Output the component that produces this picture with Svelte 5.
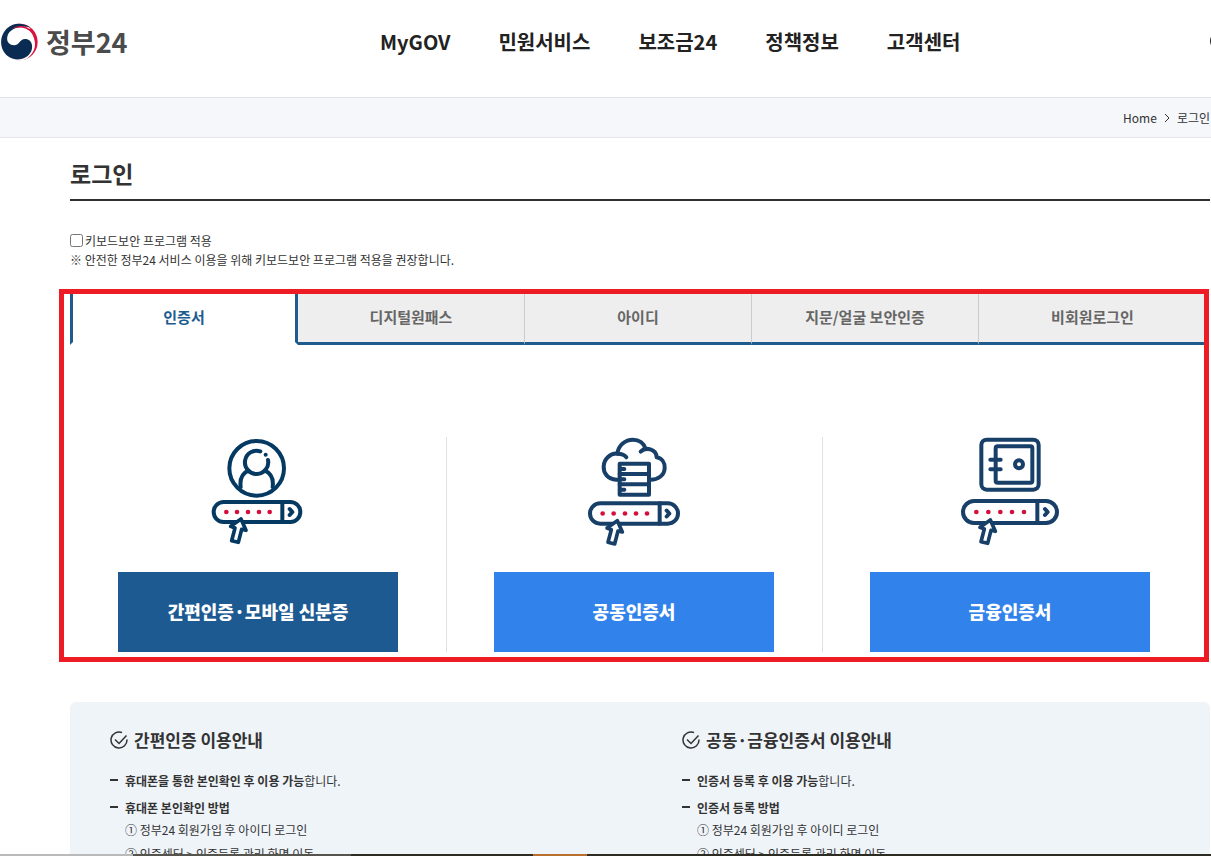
<script>
    const menus = ['MyGOV', '민원서비스', '보조금24', '정책정보', '고객센터'];
    const tabs = ['인증서', '디지털원패스', '아이디', '지문/얼굴 보안인증', '비회원로그인'];
    let activeTab = '인증서';

    const methods = [
        {
            id: 'simple', label: '간편인증·모바일 신분증', viewBox: '24 21 360 330',
            bar: { x: 71, y: 216, w: 260, h: 60 }, divider: 277, chevron: 299,
            dots: [109, 141, 174, 207, 239]
        },
        {
            id: 'joint', label: '공동인증서', viewBox: '27 21 360 330',
            bar: { x: 75, y: 220, w: 264, h: 61 }, divider: 284, chevron: 305,
            dots: [113, 146, 180, 213, 246]
        },
        {
            id: 'finance', label: '금융인증서', viewBox: '30 21 360 330',
            bar: { x: 69, y: 213, w: 282, h: 66 }, divider: 292, chevron: 315,
            dots: [109, 145, 181, 216, 252]
        }
    ];

    const guides = [
        {
            title: '간편인증 이용안내',
            strong: '휴대폰을 통한 본인확인 후 이용 가능',
            method: '휴대폰 본인확인 방법'
        },
        {
            title: '공동·금융인증서 이용안내',
            strong: '인증서 등록 후 이용 가능',
            method: '인증서 등록 방법'
        }
    ];
    const steps = ['① 정부24 회원가입 후 아이디 로그인', '② 인증센터 > 인증등록 관리 화면 이동'];
</script>

<div class="page">
    <header class="header">
        <a href="/" class="logo">
            <svg width="38" height="38" viewBox="0 0 114 114" aria-hidden="true">
                <circle cx="58" cy="57" r="55" fill="#d9123f" />
                <path d="M92 17A55 55 0 1 0 80 107C98 94 108 76 104 54C101 38 94 25 80 18Z" fill="#fff" />
                <path d="M90 13C70 -3 38 -2 19 18C-4 42 -1 80 23 99C43 115 76 112 90 91C101 75 98 52 79 48C58 45 61 66 42 67C27 67 19 55 22 41C26 20 54 7 90 13Z" fill="#0b2c52" />
                <path d="M36 17C56 4 83 7 98 28C78 13 57 10 36 17Z" fill="#d9123f" />
            </svg>
            <span>정부24</span>
        </a>
        <nav class="menu">
            {#each menus as menu}
                <a href="/">{menu}</a>
            {/each}
        </nav>
        <button class="search" type="button" aria-label="검색">
            <svg width="24" height="24" viewBox="0 0 24 24" fill="none" stroke="#222" stroke-width="2">
                <circle cx="10" cy="11" r="8" />
                <path d="M16 17l6 6" />
            </svg>
        </button>
    </header>

    <div class="breadcrumb">
        <a href="/">Home</a>
        <svg width="6" height="10" viewBox="0 0 6 10" fill="none" stroke="#333" aria-hidden="true">
            <path d="M1 1l4 4-4 4" />
        </svg>
        <span>로그인</span>
    </div>

    <main class="content">
        <h1>로그인</h1>

        <div class="security">
            <label><input type="checkbox" />키보드보안 프로그램 적용</label>
            <p>※ 안전한 정부24 서비스 이용을 위해 키보드보안 프로그램 적용을 권장합니다.</p>
        </div>

        <section class="login">
            <div class="tabs" role="tablist">
                {#each tabs as tab}
                    <button
                        type="button"
                        role="tab"
                        class="tab"
                        class:active={tab === activeTab}
                        aria-selected={tab === activeTab}
                        on:click={() => (activeTab = tab)}
                    >{tab}</button>
                {/each}
            </div>

            <div class="methods">
                {#each methods as m}
                    <div class="method">
                        <svg class="icon {m.id}" width="120" height="110" viewBox={m.viewBox} aria-hidden="true">
                            {#if m.id === 'simple'}
                                <circle cx="200" cy="115" r="82" />
                                <path d="M211 64A35 35 0 1 0 234 90" />
                                <path d="M152 171C149 147 157 130 175 122M225 122C243 130 251 147 248 171" />
                                <circle class="solid" cx="227" cy="74" r="6" />
                            {:else if m.id === 'joint'}
                                <path d="M162 149H154C128 147 115 130 116 109C117 87 136 69 157 71C171 71 180 75 184 82" />
                                <path d="M157 71C160 45 181 29 204 29C222 29 237 39 242 57" />
                                <path d="M227 65C242 50 274 56 275 82C290 84 300 97 299 115C298 136 279 150 254 149" />
                                <rect x="164" y="101" width="88" height="93" />
                                <path d="M164 132H252M164 163H252M168 117H178M168 148H178M168 179H178" />
                            {:else}
                                <rect x="124" y="29" width="172" height="150" rx="16" />
                                <rect x="167" y="49" width="110" height="109" rx="6" />
                                <path d="M151 89H182M151 118H182" />
                                <circle cx="237" cy="103" r="12" />
                            {/if}
                            <rect x={m.bar.x} y={m.bar.y} width={m.bar.w} height={m.bar.h} rx={m.bar.h / 2} />
                            <path d="M{m.divider} {m.bar.y}v{m.bar.h}" />
                            <path d="M{m.chevron} {m.bar.y + m.bar.h / 2 - 9}l8 9-8 9" />
                            {#each m.dots as x}
                                <circle class="dot" cx={x} cy={m.bar.y + m.bar.h / 2} r="7" />
                            {/each}
                            <path
                                class="pointer"
                                transform="translate({m.bar.x - 71} {m.bar.h + m.bar.y - 276})"
                                d="M153 267L122 289L135 294L125 332L145 337L155 298L168 301Z"
                            />
                        </svg>
                        <button type="button" class="method-button" class:primary={m.id === 'simple'}>{m.label}</button>
                    </div>
                {/each}
            </div>
            <div class="highlight"></div>
        </section>

        <section class="guides">
            {#each guides as guide}
                <div class="guide">
                    <h2>
                        <svg width="18" height="18" viewBox="0 0 36 36" fill="none" stroke="#333" stroke-width="3" aria-hidden="true">
                            <path d="M24 3A16 16 0 1 0 34 17" />
                            <path d="M10 17l8 8L33 9" />
                        </svg>
                        {guide.title}
                    </h2>
                    <ul>
                        <li><strong>{guide.strong}</strong>합니다.</li>
                        <li>
                            <strong>{guide.method}</strong>
                            {#each steps as step}
                                <p>{step}</p>
                            {/each}
                        </li>
                    </ul>
                </div>
            {/each}
        </section>
    </main>

    <div class="taskbar"><span class="light"></span><span class="dark"></span><span class="rest"></span><span class="orange"></span><span class="rest"></span></div>
</div>

<style>
    :global(body) {
        margin: 0;
    }
    .page {
        height: 100vh;
        overflow: hidden;
        background: #fff;
        color: #333;
        font-family: "Noto Sans CJK KR", "Noto Sans", sans-serif;
        font-size: 12px;
    }
    a {
        color: inherit;
        text-decoration: none;
    }
    button {
        border: 0;
        padding: 0;
        font-family: inherit;
        cursor: pointer;
    }
    h1, h2, p, ul {
        margin: 0;
        padding: 0;
    }

    .header {
        display: flex;
        align-items: center;
        height: 84px;
        padding-bottom: 13px;
        border-bottom: 1px solid #e0e3e6;
    }
    .logo {
        display: flex;
        align-items: center;
        flex: 0 0 380px;
        gap: 8px;
        font-size: 27px;
        font-weight: 700;
        line-height: 38px;
        color: #4b4b4b;
    }
    .menu {
        display: flex;
        gap: 48px;
        font-size: 20px;
        font-weight: 700;
        line-height: 30px;
        color: #222;
    }
    .search {
        flex-shrink: 0;
        height: 24px;
        margin: 0 -22px 0 auto;
        background: none;
    }

    .breadcrumb {
        display: flex;
        align-items: center;
        justify-content: flex-end;
        gap: 7px;
        height: 39px;
        padding-right: 1px;
        background: #f5f7fb;
        border-bottom: 1px solid #e6e8eb;
    }

    .content {
        padding: 0 1px 0 70px;
    }
    h1 {
        padding: 15px 0 6px;
        border-bottom: 2px solid #2d2f31;
        font-size: 23px;
        font-weight: 700;
        line-height: 40px;
    }
    .security {
        padding: 30px 0 20px;
        line-height: 19px;
    }
    .security label {
        display: flex;
        align-items: center;
        gap: 2px;
    }
    .security input {
        width: 13px;
        height: 13px;
        margin: 0;
    }

    .login {
        position: relative;
        padding-bottom: 10px;
    }
    /* red marker frame drawn over the whole login area */
    .highlight {
        position: absolute;
        inset: 0 1px 0 -11px;
        border: 5px solid #ed1c24;
        pointer-events: none;
    }
    .tabs {
        display: grid;
        grid-template-columns: 228px repeat(4, 1fr);
        padding-right: 4px;
    }
    .tab {
        height: 56px;
        padding-top: 1px;
        background: #eee;
        border-right: 1px solid #ccc;
        border-bottom: 3px solid #205b8e;
        font-size: 15px;
        font-weight: 700;
        color: #666;
    }
    .tab:last-child {
        border-right: 0;
    }
    .tab.active {
        background: #fff;
        border-right: 3px solid #205b8e;
        border-bottom-color: transparent;
        border-left: 3px solid #205b8e;
        color: #205b8e;
    }
    .methods {
        display: grid;
        grid-template-columns: repeat(3, 1fr);
        padding: 92px 12px 0 0;
    }
    .method {
        display: flex;
        flex-direction: column;
        align-items: center;
        gap: 25px;
    }
    .method + .method {
        box-shadow: inset 1px 0 #e0e0e0;
    }
    .icon {
        fill: none;
        stroke: #173f68;
        stroke-width: 12;
        stroke-linecap: round;
        stroke-linejoin: round;
    }
    .icon.simple {
        stroke: #043962;
    }
    .icon .solid {
        fill: #043962;
        stroke: none;
    }
    .icon .dot {
        fill: #d50f3c;
        stroke: none;
    }
    .icon .pointer {
        fill: #fff;
        stroke-width: 11;
    }
    .method-button {
        width: 280px;
        height: 80px;
        padding-bottom: 2px;
        background: #3282eb;
        font-size: 18px;
        font-weight: 900;
        color: #fff;
    }
    .method-button.primary {
        background: #1d5a92;
    }

    .guides {
        display: grid;
        grid-template-columns: 1fr 1fr;
        gap: 84px;
        margin-top: 40px;
        padding: 24px 40px 40px;
        border-radius: 6px;
        background: #eff4f9;
    }
    h2 {
        display: flex;
        align-items: center;
        gap: 6px;
        margin-bottom: 16px;
        font-size: 17px;
        font-weight: 700;
        line-height: 28px;
    }
    ul {
        display: grid;
        gap: 5px;
        list-style: none;
        line-height: 22px;
    }
    li {
        padding-left: 15px;
        background: linear-gradient(#333, #333) 0 9px / 8px 2px no-repeat;
    }
    li p + p {
        margin-top: 2px;
    }

    .taskbar {
        position: fixed;
        inset: auto 0 0;
        display: grid;
        grid-template-columns: 11% 18% 15% 54px 1fr;
        height: 2px;
    }
    .light {
        background: #b9bab9;
    }
    .dark {
        background: #55554e;
    }
    .orange {
        background: #b8702c;
    }
    .rest {
        background: #2c2c22;
    }
</style>
